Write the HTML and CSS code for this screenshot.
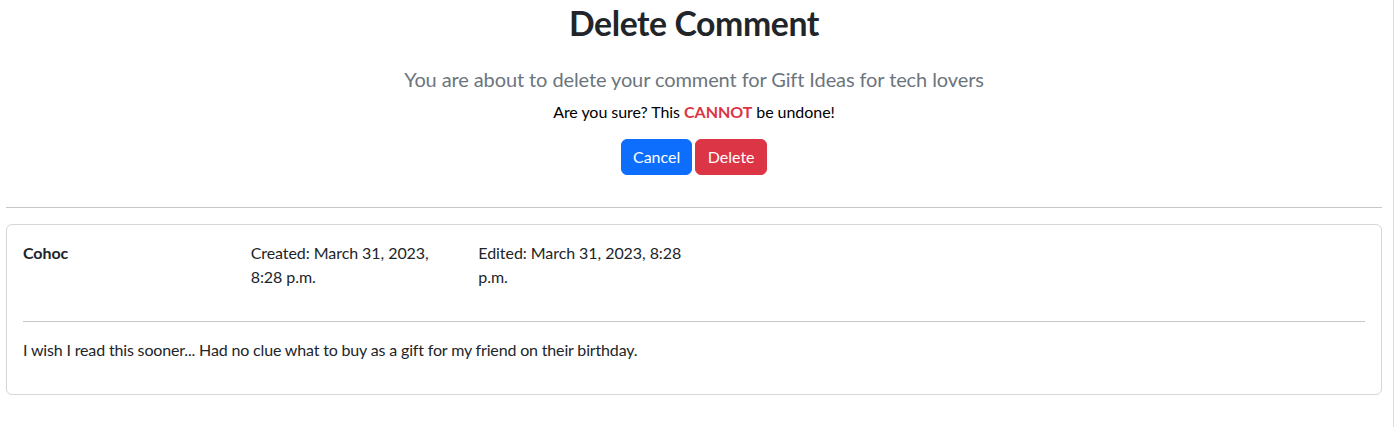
FILE: index.html
```html
<!DOCTYPE html>
<html lang="en">
<head>
<meta charset="utf-8">
<title>Delete Comment</title>
<link rel="stylesheet" href="styles.css">
</head>
<body>
<div class="page">
  <main class="content">
    <section class="confirm">
      <h2 class="title">Delete Comment</h2>
      <p class="lead">You are about to delete your comment for Gift Ideas for tech lovers</p>
      <p class="warn">Are you sure? This <strong class="danger">CANNOT</strong> be undone!</p>
      <form class="actions">
        <button type="button" class="btn btn-primary">Cancel</button>
        <button type="button" class="btn btn-danger">Delete</button>
      </form>
    </section>
    <hr class="rule">
    <article class="card">
      <div class="card-body">
        <div class="meta">
          <p class="col author">Cohoc</p>
          <p class="col">Created: March 31, 2023, 8:28 p.m.</p>
          <p class="col">Edited: March 31, 2023, 8:28 p.m.</p>
        </div>
        <hr class="rule">
        <p class="body-text">I wish I read this sooner... Had no clue what to buy as a gift for my friend on their birthday.</p>
      </div>
    </article>
  </main>
</div>
</body>
</html>
```

FILE: styles.css
```css
* { box-sizing: border-box; }
html, body { margin: 0; padding: 0; background: #fff; }
body {
  font-family: Lato, "Noto Sans", sans-serif;
  font-size: 16px;
  line-height: 1.5;
  color: #212529;
}
.page {
  width: 1394px;
  min-height: 427px;
  border-right: 1px solid #dcdcdc;
}
.content {
  padding: 3px 11px 0 6px;
}
.confirm {
  text-align: center;
  padding-bottom: 16px;
}
.title {
  margin: 0 0 20px;
  font-size: 33.75px;
  line-height: 1.2;
  font-weight: 700;
  letter-spacing: -0.4px;
  color: #212529;
}
.lead {
  margin: 0 0 6px;
  font-size: 20px;
  line-height: 30px;
  font-weight: 400;
  letter-spacing: -0.1px;
  color: #6c757d;
}
.warn {
  margin: 0 0 15px;
  color: #000;
  letter-spacing: -0.05px;
}
.danger { color: #dc3545; font-weight: 700; }
.actions {
  display: flex;
  justify-content: center;
  gap: 3px;
  margin: 0;
}
.btn {
  font-family: inherit;
  font-size: 16px;
  line-height: 24px;
  height: 36px;
  padding: 0 11px;
  border: 1px solid transparent;
  border-radius: 6px;
  color: #fff;
  cursor: pointer;
}
.btn-primary { background: #0d6efd; border-color: #0d6efd; }
.btn-danger { background: #dc3545; border-color: #dc3545; padding: 0 11.5px; }
.rule {
  margin: 16px 0;
  border: 0;
  border-top: 1px solid #c8c8c8;
}
.card {
  border: 1px solid #d6d6d6;
  border-radius: 6px;
}
.card-body { padding: 16px; }
.meta {
  display: grid;
  grid-template-columns: repeat(6, 1fr);
  margin: 0 -12px 16px;
}
.col {
  margin: 0 0 16px;
  padding: 0 12px;
  letter-spacing: -0.06px;
}
.author { font-weight: 700; }
.body-text {
  margin: 0 0 16px;
  letter-spacing: -0.16px;
}
.card-body .rule { margin: 0 0 16px; }
```
